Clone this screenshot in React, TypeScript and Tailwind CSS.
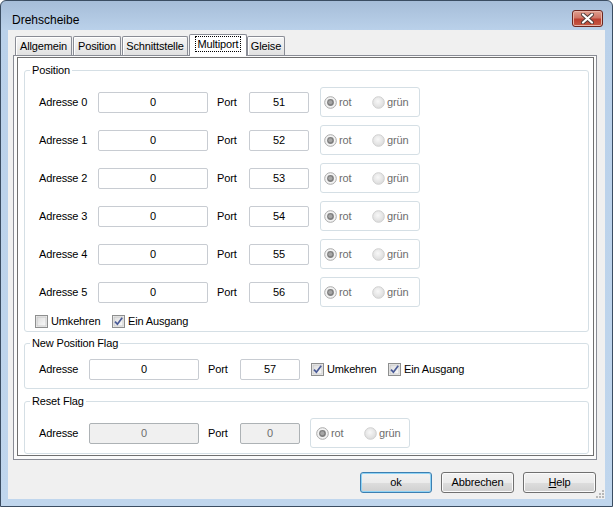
import React from 'react';

type Kids = { children?: React.ReactNode };

function RadioMark({ checked }: { checked: boolean }) {
    return (
        <svg width="13" height="13" viewBox="0 0 13 13" className="shrink-0">
            <defs>
                <radialGradient id="radioFill" cx="45%" cy="40%" r="65%">
                    <stop offset="0%" stopColor="#f8f8f8" />
                    <stop offset="100%" stopColor="#d9d9d9" />
                </radialGradient>
            </defs>
            {checked ? (
                <>
                    <circle cx="6.5" cy="6.5" r="5.8" fill="#f3f3f3" stroke="#a9a9a9" strokeWidth="1" />
                    <circle cx="6.5" cy="6.5" r="3.4" fill="#7f7f7f" />
                    <circle cx="6.3" cy="6.2" r="2" fill="#a6a6a6" />
                </>
            ) : (
                <circle cx="6.5" cy="6.5" r="5.8" fill="url(#radioFill)" stroke="#cfcfcf" strokeWidth="1" />
            )}
        </svg>
    );
}

function CheckMark() {
    return (
        <svg width="13" height="13" viewBox="0 0 13 13" className="shrink-0">
            <defs>
                <linearGradient id="checkFill" x1="0" y1="0" x2="1" y2="1">
                    <stop offset="0%" stopColor="#dcdcdc" />
                    <stop offset="100%" stopColor="#fbfbfb" />
                </linearGradient>
            </defs>
            <rect x="0.5" y="0.5" width="12" height="12" fill="#f4f4f4" stroke="#8e8f8f" />
            <rect x="2" y="2" width="9" height="9" fill="url(#checkFill)" stroke="#c4c4c4" strokeWidth="0.8" />
        </svg>
    );
}

function Checkbox({ checked, label, className = '' }: { checked: boolean; label: string; className?: string }) {
    return (
        <div className={`flex items-center ${className}`}>
            <div className="relative h-[13px] w-[13px] shrink-0">
                <CheckMark />
                {checked && (
                    <svg width="13" height="13" viewBox="0 0 13 13" className="absolute left-0 top-0">
                        <path d="M3 6.6 L5.4 9.2 L10.2 2.8" fill="none" stroke="#4a5b97" strokeWidth="1.7" />
                    </svg>
                )}
            </div>
            <span className="ml-[3px] leading-[13px]">{label}</span>
        </div>
    );
}

function Field({ value, w, disabled = false }: { value: string; w: string; disabled?: boolean }) {
    return (
        <div
            className={`flex h-[21px] shrink-0 items-center justify-center rounded-[2px] border ${w} ${
                disabled ? 'border-[#adb2b5] bg-[#f0f0f0] text-[#6d6d6d]' : 'border-[#c8ccd2] bg-white text-black'
            }`}
        >
            {value}
        </div>
    );
}

function RadioBox({ className = '' }: { className?: string }) {
    return (
        <div className={`flex h-[30px] w-[100px] shrink-0 items-center rounded-[3px] border border-[#d5dfe5] bg-white text-[#6d6d6d] ${className}`}>
            <div className="flex w-[48px] items-center">
                <RadioMark checked />
                <span className="ml-[2px]">rot</span>
            </div>
            <div className="flex items-center">
                <RadioMark checked={false} />
                <span className="ml-[2px]">grün</span>
            </div>
        </div>
    );
}

function GroupBox({ title, className = '', children }: Kids & { title: string; className?: string }) {
    return (
        <fieldset className={`ml-[6px] w-[565px] rounded-[3px] border border-[#d5dfe5] pl-[5px] ${className}`}>
            <legend className="px-[2px] leading-[13px] text-black">{title}</legend>
            {children}
        </fieldset>
    );
}

function Tab({ label, w, selected = false, className = '' }: { label: string; w: string; selected?: boolean; className?: string }) {
    if (selected) {
        return (
            <div className={`relative z-10 -mb-[1px] flex h-[22px] items-start justify-center rounded-t-[2px] border border-b-0 border-[#898c95] bg-white pt-[2px] ${w} ${className}`}>
                <span className="px-[2px] leading-[14px] outline outline-1 outline-dotted outline-black">{label}</span>
            </div>
        );
    }
    return (
        <div
            className={`flex h-[19px] items-center justify-center rounded-t-[2px] border border-b-0 border-[#898c95] bg-[linear-gradient(180deg,#f5f5f5_0%,#ececec_50%,#e1e1e1_100%)] shadow-[inset_1px_1px_0_#ffffff] ${w} ${className}`}
        >
            {label}
        </div>
    );
}

function Button({ label, def = false, underline = false }: { label: string; def?: boolean; underline?: boolean }) {
    return (
        <div
            className={`flex h-[21px] items-center justify-center rounded-[3px] border bg-[linear-gradient(180deg,#f2f2f2_0%,#ebebeb_50%,#dddddd_51%,#cfcfcf_100%)] ${
                def
                    ? 'w-[72px] border-[#3c7fb1] shadow-[inset_0_0_0_1px_#8fd3f5]'
                    : 'w-[73px] border-[#707070] shadow-[inset_0_0_0_1px_#fbfbfb]'
            }`}
        >
            {underline ? (
                <span>
                    <span className="underline">{label[0]}</span>
                    {label.slice(1)}
                </span>
            ) : (
                label
            )}
        </div>
    );
}

const ports = [51, 52, 53, 54, 55, 56];

export default function App() {
    return (
        <div className="h-[507px] w-[613px] font-['Liberation_Sans',Arial,sans-serif] text-[11px] tracking-[-0.15px] text-black">
            <div className="flex h-full w-full flex-col rounded-t-[6px] border border-[#3b4d62] bg-[linear-gradient(180deg,#a6bdd8_0px,#bad1ea_29px,#c0d6ed_100%)] px-[7px] pb-[7px]">
                {/* title bar */}
                <div className="flex h-[29px] shrink-0 items-start justify-between">
                    <span className="mt-[12px] pl-[4px] text-[12px] leading-[14px] tracking-normal">Drehscheibe</span>
                    <div className="mr-[2px] mt-[9px] flex h-[17px] w-[31px] items-center justify-center rounded-[3px] border border-[#6b2620] bg-[linear-gradient(180deg,#e0a090_0%,#d07566_45%,#bb3f30_55%,#c65a45_100%)] shadow-[inset_0_0_0_1px_#e8b4a8]">
                        <svg width="13" height="11" viewBox="0 0 13 11">
                            <path d="M2 1.5 L11 9.5 M11 1.5 L2 9.5" stroke="#4d3a38" strokeWidth="4" strokeLinecap="round" />
                            <path d="M2 1.5 L11 9.5 M11 1.5 L2 9.5" stroke="#ffffff" strokeWidth="2.2" strokeLinecap="round" />
                        </svg>
                    </div>
                </div>

                {/* client */}
                <div className="relative flex flex-1 flex-col bg-[#f0f0f0] pl-[5px] pt-[4px]">
                    <div className="ml-[2px] flex h-[21px] items-end">
                        <Tab label="Allgemein" w="w-[57px]" />
                        <Tab label="Position" w="w-[48px]" className="ml-[1px]" />
                        <Tab label="Schnittstelle" w="w-[66px]" className="ml-[1px]" />
                        <Tab label="Multiport" w="w-[58px]" selected className="ml-[1px]" />
                        <Tab label="Gleise" w="w-[38px]" />
                    </div>

                    <div className="h-[405px] w-[584px] border border-[#898c95] bg-[#fbfbfb] pl-[3px] pt-[1px]">
                        <div className="flex h-[399px] w-[577px] flex-col border border-[#6f6f6f] bg-white">
                            <GroupBox title="Position" className="mt-[6px] pb-[3px] pt-[10px]">
                                <div className="flex flex-col gap-[8px]">
                                    {ports.map((port, i) => (
                                        <div key={port} className="flex h-[30px] items-center pl-[9px]">
                                            <span className="w-[59px] shrink-0">Adresse {i}</span>
                                            <Field value="0" w="w-[110px]" />
                                            <span className="ml-[9px] w-[32px] shrink-0">Port</span>
                                            <Field value={String(port)} w="w-[60px]" />
                                            <RadioBox className="ml-[11px] pl-[3px]" />
                                        </div>
                                    ))}
                                    <div className="flex h-[13px] items-center pl-[5px]">
                                        <Checkbox checked={false} label="Umkehren" className="w-[77px]" />
                                        <Checkbox checked label="Ein Ausgang" />
                                    </div>
                                </div>
                            </GroupBox>

                            <GroupBox title="New Position Flag" className="mt-[5px] pb-[8px] pt-[9px]">
                                <div className="flex h-[21px] items-center pl-[9px]">
                                    <span className="w-[50px] shrink-0">Adresse</span>
                                    <Field value="0" w="w-[110px]" />
                                    <span className="ml-[9px] w-[32px] shrink-0">Port</span>
                                    <Field value="57" w="w-[60px]" />
                                    <Checkbox checked label="Umkehren" className="ml-[11px] w-[77px]" />
                                    <Checkbox checked label="Ein Ausgang" />
                                </div>
                            </GroupBox>

                            <GroupBox title="Reset Flag" className="mt-[6px] pb-[5px] pt-[10px]">
                                <div className="flex h-[30px] items-center pl-[9px]">
                                    <span className="w-[50px] shrink-0">Adresse</span>
                                    <Field value="0" w="w-[110px]" disabled />
                                    <span className="ml-[9px] w-[32px] shrink-0">Port</span>
                                    <Field value="0" w="w-[60px]" disabled />
                                    <RadioBox className="ml-[10px] pl-[5px]" />
                                </div>
                            </GroupBox>
                        </div>
                    </div>

                    <div className="mt-[12px] flex justify-end gap-[9px] pr-[9px]">
                        <Button label="ok" def />
                        <Button label="Abbrechen" />
                        <Button label="Help" underline />
                    </div>

                    <svg width="8" height="8" viewBox="0 0 8 8" className="absolute bottom-[1px] right-[1px]">
                        <rect x="6" y="0" width="2" height="2" fill="#b8b8b8" />
                        <rect x="3" y="3" width="2" height="2" fill="#b8b8b8" />
                        <rect x="6" y="3" width="2" height="2" fill="#b8b8b8" />
                        <rect x="0" y="6" width="2" height="2" fill="#b8b8b8" />
                        <rect x="3" y="6" width="2" height="2" fill="#b8b8b8" />
                        <rect x="6" y="6" width="2" height="2" fill="#b8b8b8" />
                    </svg>
                </div>
            </div>
        </div>
    );
}
